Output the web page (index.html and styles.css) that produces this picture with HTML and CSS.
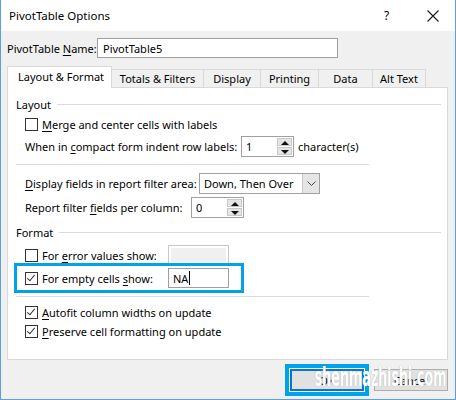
FILE: index.html
```html
<!DOCTYPE html>
<html lang="en">
<head>
  <meta charset="UTF-8" />
  <title>PivotTable Options</title>
  <link rel="stylesheet" href="styles.css">
</head>
<body>

  <div class="dialog">
    <!-- Title bar -->
    <header class="titlebar">
      <span class="title">PivotTable Options</span>
      <span class="help">?</span>
      <span class="close">
        <svg width="12" height="12" viewBox="0 0 12 12"><path d="M0.5 0.5 L11.5 11.5 M11.5 0.5 L0.5 11.5" stroke="#1a1a1a" stroke-width="1.1" fill="none"/></svg>
      </span>
    </header>

    <div class="dialog-body">
      <div class="name-row">
        <span class="name-label">PivotTable <u>N</u>ame:</span>
        <div class="textbox name-box">PivotTable5</div>
      </div>

      <!-- Tabs -->
      <nav class="tabs">
        <span class="tab active">Layout &amp; Format</span>
        <span class="tab tab-totals">Totals &amp; Filters</span>
        <span class="tab tab-display">Display</span>
        <span class="tab tab-printing">Printing</span>
        <span class="tab tab-data">Data</span>
        <span class="tab tab-alt">Alt Text</span>
      </nav>

      <section class="panel">
        <div class="group-head group-layout"><span>Layout</span><i class="group-line"></i></div>

        <div class="row check-row row-merge">
          <span class="checkbox"></span>
          <span><u>M</u>erge and center cells with labels</span>
        </div>

        <div class="row row-indent">
          <span class="label label-indent">When in <u>c</u>ompact form indent row labels:</span>
          <div class="spinner spinner-indent">
            <span class="spin-value">1</span>
            <span class="spin-btns"><i class="up"></i><i class="down"></i></span>
          </div>
          <span class="after">character(s)</span>
        </div>

        <hr class="sep sep-1">

        <div class="row row-display">
          <span class="label label-display"><u>D</u>isplay fields in report filter area:</span>
          <div class="dropdown">
            <span class="drop-value">Down, Then Over</span>
            <span class="drop-btn">
              <svg width="9" height="5" viewBox="0 0 9 5"><path d="M0.5 0.5 L4.5 4.5 L8.5 0.5" stroke="#444" fill="none"/></svg>
            </span>
          </div>
        </div>

        <div class="row row-report">
          <span class="label label-report">Report filter <u>f</u>ields per column:</span>
          <div class="spinner spinner-report">
            <span class="spin-value">0</span>
            <span class="spin-btns"><i class="up"></i><i class="down"></i></span>
          </div>
        </div>

        <div class="group-head group-format"><span>Format</span><i class="group-line"></i></div>

        <div class="row check-row row-error">
          <span class="checkbox"></span>
          <span class="label label-error">For <u>e</u>rror values show:</span>
          <div class="textbox small-box disabled"></div>
        </div>

        <div class="row check-row row-empty">
          <span class="checkbox checked"></span>
          <span class="label label-error">For empty cells <u>s</u>how:</span>
          <div class="textbox small-box">NA<i class="caret"></i></div>
        </div>

        <hr class="sep sep-2">

        <div class="row check-row row-autofit">
          <span class="checkbox checked"></span>
          <span><u>A</u>utofit column widths on update</span>
        </div>

        <div class="row check-row row-preserve">
          <span class="checkbox checked"></span>
          <span><u>P</u>reserve cell formatting on update</span>
        </div>
      </section>

      <footer class="buttons">
        <button class="btn btn-ok">OK</button>
        <button class="btn btn-cancel">Cancel</button>
        <span class="watermark">shenmazhishi.com</span>
      </footer>
    </div>
  </div>

</body>
</html>
```
FILE: styles.css
```css
body {
  margin: 0;
  font-family: "Noto Sans", sans-serif;
  font-size: 11px;
  color: #000;
}

u {
  text-decoration-thickness: 1px;
  text-underline-offset: 2px;
}

.dialog {
  width: 456px;
  height: 400px;
  box-sizing: border-box;
  border: 1px solid #5b9fe0;
  border-top: none;
  background: #f0f0f0;
  display: flex;
  flex-direction: column;
}

/* Title bar */
.titlebar {
  height: 31px;
  background: #fff;
  display: flex;
  align-items: center;
  padding-left: 8px;
}

.title {
  font-size: 11.5px;
  flex: 1;
}

.help {
  font-size: 12px;
  width: 12px;
  margin-right: 31px;
}

.close {
  display: flex;
  margin-right: 16px;
}

.dialog-body {
  flex: 1;
  display: flex;
  flex-direction: column;
  padding: 7px 0 0 6px;
  position: relative;
}

/* Name row */
.name-row {
  display: flex;
  align-items: center;
  height: 20px;
}

.name-label {
  width: 90px;
}

.textbox {
  box-sizing: border-box;
  height: 20px;
  background: #fff;
  border: 1px solid #a0a0a0;
  padding: 0 5px;
  display: flex;
  align-items: center;
}

.name-box {
  width: 241px;
}

/* Tabs */
.tabs {
  display: flex;
  align-items: flex-end;
  margin-top: 8px;
  height: 21px;
  position: relative;
  z-index: 1;
}

.tab {
  box-sizing: border-box;
  height: 18px;
  border: 1px solid #d9d9d9;
  border-bottom: none;
  border-left: none;
  background: #f0f0f0;
  display: flex;
  align-items: center;
  justify-content: center;
}

.tab.active {
  height: 22px;
  margin-bottom: -1px;
  background: #fff;
  border-left: 1px solid #d9d9d9;
  width: 105px;
  justify-content: flex-start;
  padding-left: 10px;
  padding-bottom: 2px;
}

.tab-totals { width: 92px; }
.tab-display { width: 57px; }
.tab-printing { width: 58px; }
.tab-data { width: 54px; }
.tab-alt { width: 53px; }

/* Tab panel */
.panel {
  box-sizing: border-box;
  width: 441px;
  height: 273px;
  background: #fff;
  border: 1px solid #d9d9d9;
  padding: 8px 6px 0 8px;
  display: flex;
  flex-direction: column;
}

.group-head {
  height: 16px;
  display: flex;
  align-items: center;
}

.group-line {
  flex: 1;
  height: 1px;
  background: #dcdcdc;
  margin-left: 6px;
}

.group-format {
  margin-top: 6px;
}

.row {
  display: flex;
  align-items: center;
  padding-left: 9px;
}

.check-row {
  height: 18px;
}

.checkbox {
  box-sizing: border-box;
  width: 13px;
  height: 13px;
  border: 1px solid #333;
  margin-right: 4px;
  position: relative;
}

.checkbox.checked::after {
  content: "";
  position: absolute;
  left: 3px;
  top: 0px;
  width: 3px;
  height: 7px;
  border: solid #333;
  border-width: 0 1.2px 1.2px 0;
  transform: rotate(40deg);
}

.row-merge { margin-top: 3px; }
.row-indent { margin-top: 3px; height: 21px; }
.row-display { margin-top: 8px; height: 21px; }
.row-report { margin-top: 3px; height: 21px; }
.row-error { margin-top: 5px; height: 20px; }

.row-empty {
  margin-top: 1px;
  margin-left: 1px;
  padding-left: 8px;
  width: 224px;
  height: 24px;
  box-sizing: border-box;
  outline: 3px solid #00a2e8;
}

.row-autofit { margin-top: 6px; }
.row-preserve { margin-top: 1px; }

.label-indent { width: 216px; }
.label-display { width: 174px; }
.label-report { width: 166px; }
.label-error { width: 126px; }

.after {
  margin-left: 4px;
}

.sep {
  margin: 0;
  border: none;
  height: 1px;
  width: 353px;
  background: #dcdcdc;
}

.sep-1 { margin-top: 7px; }
.sep-2 { margin-top: 6px; }

/* Spinner */
.spinner {
  box-sizing: border-box;
  width: 53px;
  height: 21px;
  border: 1px solid #a0a0a0;
  display: flex;
  background: #fff;
}

.spin-value {
  flex: 1;
  padding-left: 4px;
  display: flex;
  align-items: center;
}

.spin-btns {
  width: 16px;
  display: flex;
  flex-direction: column;
  gap: 1px;
  padding: 1px 1px 1px 0;
  box-sizing: border-box;
}

.spin-btns i {
  flex: 1;
  background: #e5e5e5;
  border: 1px solid #c8c8c8;
  position: relative;
}

.spin-btns i::after {
  content: "";
  position: absolute;
  left: 3px;
  border-left: 4px solid transparent;
  border-right: 4px solid transparent;
}

.spin-btns .up::after {
  top: 2px;
  border-bottom: 4px solid #111;
}

.spin-btns .down::after {
  top: 2px;
  border-top: 4px solid #111;
}

/* Dropdown */
.dropdown {
  box-sizing: border-box;
  width: 121px;
  height: 21px;
  border: 1px solid #a0a0a0;
  display: flex;
  background: #fff;
}

.drop-value {
  flex: 1;
  padding-left: 4px;
  display: flex;
  align-items: center;
}

.drop-btn {
  width: 16px;
  background: #e5e5e5;
  border-left: 1px solid #c8c8c8;
  display: flex;
  align-items: center;
  justify-content: center;
}

.small-box {
  width: 61px;
  padding-left: 4px;
}

.small-box.disabled {
  background: #f0f0f0;
  border-color: #c8c8c8;
  box-shadow: inset 0 0 0 2px #fff;
}

.caret {
  width: 1px;
  height: 14px;
  background: #000;
  margin-left: 1px;
}

/* Buttons */
.buttons {
  display: flex;
  justify-content: flex-end;
  gap: 10px;
  padding: 9px 7px 0 0;
  position: relative;
}

.btn {
  box-sizing: border-box;
  width: 74px;
  height: 22px;
  font: inherit;
  color: #000;
  background: #e1e1e1;
  border: 1px solid #adadad;
  padding: 0;
}

.btn-ok {
  border: 2px solid #0078d7;
  box-shadow: 0 0 0 1px #fff, 0 0 0 5px #00a2e8;
}

/* watermark printed over the buttons */
.watermark {
  position: absolute;
  right: 9px;
  top: 2px;
  font-family: "DejaVu Sans Condensed", sans-serif;
  font-weight: bold;
  font-size: 26px;
  color: #fff;
  text-shadow: 0 0 1px #999;
  transform: scaleX(0.56);
  transform-origin: right center;
  letter-spacing: -0.5px;
}
```
